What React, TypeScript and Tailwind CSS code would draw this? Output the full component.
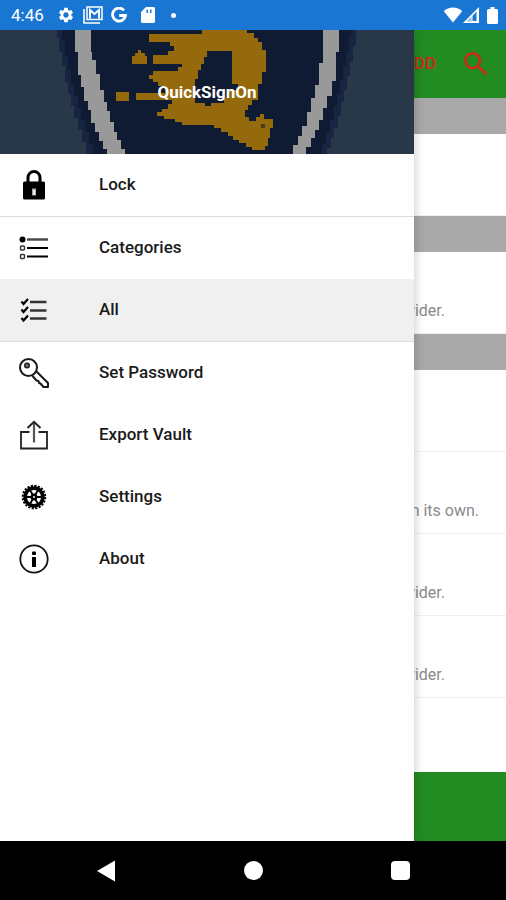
import type { ReactNode } from "react";
import { MdSearch, MdSettings } from "react-icons/md";

function LockIcon() {
  return (
    <svg viewBox="0 0 30 30" className="size-[30px]" aria-hidden="true">
      <path d="M9 12V7.500a6 6 0 0 1 12 0V12" fill="none" stroke="#000" strokeWidth="3" />
      <rect x="4" y="11.500" width="22" height="18" rx="1.500" />
      <path d="M13 18.500h4v7h-4z" fill="#aaa" />
      <path d="M14.500 20h1.500v5h-1.500z" fill="#fff" />
    </svg>
  );
}

function CategoriesIcon() {
  return (
    <svg viewBox="0 0 30 30" className="size-[30px]" aria-hidden="true">
      <circle cx="3.500" cy="6.500" r="3" />
      <path d="M8 6.500h21" stroke="#444" strokeWidth="2.400" />
      <path d="M8 15h21M8 23.500h21" stroke="#000" strokeWidth="2.200" />
      <rect x="1.500" y="13" width="4" height="4" rx="1" fill="none" stroke="#333" strokeWidth="1.400" />
      <rect x="1.500" y="21.500" width="4" height="4" rx="1" fill="none" stroke="#333" strokeWidth="1.400" />
    </svg>
  );
}

function ChecklistIcon() {
  return (
    <svg viewBox="0 0 30 30" className="size-[30px]" aria-hidden="true">
      <path d="M11 7h16.500M11 15.500h16.500M11 23.500h16.500" stroke="#333" strokeWidth="2.400" />
      <path d="M2.500 6.500l2 2.500L9 4M2.500 14.500l2 2.500L9 12M2.500 23l2 2.500L9 20.500" fill="none" stroke="#000" strokeWidth="2.200" />
    </svg>
  );
}

function KeyIcon() {
  return (
    <svg viewBox="0 0 30 30" className="size-[30px]" fill="none" stroke="#1a1a1a" strokeWidth="2" aria-hidden="true">
      <circle cx="9.500" cy="9.500" r="8.500" />
      <circle cx="8" cy="7.500" r="2.300" fill="#777" strokeWidth="1.400" />
      <path d="M17.500 13.500L29 25v4h-4.500l-3-3.500-1.500-.5-.5-2-2-.5-4-4.500" strokeLinejoin="round" />
    </svg>
  );
}

function ExportIcon() {
  return (
    <svg viewBox="0 0 30 30" className="size-[30px]" fill="none" stroke="#222" aria-hidden="true">
      <path d="M10.500 12H2v16.500h26V12h-8.500" strokeWidth="1.800" />
      <path d="M15 2v20.500" stroke="#555" strokeWidth="2.200" />
      <path d="M8.500 8L15 1.800 21.500 8" strokeWidth="2" />
    </svg>
  );
}

function GearIcon() {
  return (
    <svg viewBox="0 0 30 30" className="size-[30px]" fill="none" stroke="#000" aria-hidden="true">
      <circle cx="15" cy="15" r="8.900" strokeWidth="3.600" />
      <circle cx="15" cy="15" r="11.300" strokeWidth="1.900" strokeDasharray="2.200 1.350" />
      <path d="M6 15h18M10.500 7.200l9 15.600M19.500 7.200l-9 15.600" strokeWidth="1.900" />
      <circle cx="15" cy="15" r="3.400" fill="#000" stroke="none" />
      <circle cx="15" cy="15" r="1" fill="#fff" stroke="none" />
    </svg>
  );
}

function InfoIcon() {
  return (
    <svg viewBox="0 0 30 30" className="size-[30px]" aria-hidden="true">
      <circle cx="15" cy="15" r="13.700" fill="none" stroke="#111" strokeWidth="1.800" />
      <rect x="13" y="7.500" width="4" height="3.500" rx="1" />
      <rect x="13" y="13" width="4" height="10" />
    </svg>
  );
}

function MailIcon() {
  return (
    <svg viewBox="0 0 20 18" className="h-[18px] w-5" fill="none" stroke="#fff" aria-hidden="true">
      <path d="M1 3v14h16" strokeWidth="1.600" />
      <rect x="4" y="1" width="15" height="12.500" strokeWidth="1.500" />
      <path d="M7 12.500V4l4.500 4L16 4v8.500" strokeWidth="2" />
    </svg>
  );
}

function GoogleIcon() {
  return (
    <svg viewBox="0 0 16 16" className="size-4" fill="none" stroke="#fff" strokeWidth="2.800" aria-hidden="true">
      <path d="M13 3.400A6.500 6.500 0 1 0 14.500 8.500H8.200" />
    </svg>
  );
}

function SdCardIcon() {
  return (
    <svg viewBox="0 0 14 16" className="h-4 w-3.5" fill="#fff" aria-hidden="true">
      <path
        fillRule="evenodd"
        d="M5 0h7.500A1.500 1.500 0 0 1 14 1.500v13a1.500 1.500 0 0 1-1.500 1.500h-11A1.500 1.500 0 0 1 0 14.500V5zM5.500 2.500V6H7V2.500zM9 2.500V6h1.500V2.500z"
      />
    </svg>
  );
}

function WifiIcon() {
  return (
    <svg viewBox="0 0 20 16" className="h-4 w-5" fill="#fff" aria-hidden="true">
      <path d="M10 15.500L.8 4.200C3.300 1.800 6.500.5 10 .5s6.700 1.300 9.200 3.700z" />
    </svg>
  );
}

function SignalIcon() {
  return (
    <svg viewBox="0 0 16 16" className="size-4" aria-hidden="true">
      <path d="M0 16L16 0v16z" fill="#fff" />
      <path d="M9.500 9L13.500 4.500V14h-4z" fill="#1976d2" />
      <path d="M3.500 14.500l5-5v5z" fill="#8dbbe9" />
    </svg>
  );
}

function BatteryIcon() {
  return (
    <svg viewBox="0 0 11 17" className="h-[17px] w-[11px]" fill="#fff" aria-hidden="true">
      <path d="M3.500 0h4v2h2A1.500 1.500 0 0 1 11 3.500v12A1.500 1.500 0 0 1 9.500 17h-8A1.500 1.500 0 0 1 0 15.500v-12A1.500 1.500 0 0 1 1.500 2h2z" />
    </svg>
  );
}

function StatusBar() {
  return (
    <div className="flex h-[30px] items-center justify-between bg-[#1976d2] pl-[11px] pr-2 text-white">
      <div className="flex items-center">
        <span className="w-[46px] text-[17px] leading-5">4:46</span>
        <div className="flex items-center gap-2">
          <MdSettings className="size-[18px]" />
          <MailIcon />
          <GoogleIcon />
        </div>
        <div className="ml-3.5 flex items-center gap-4">
          <SdCardIcon />
          <span className="size-[5px] rounded-full bg-white" />
        </div>
      </div>
      <div className="flex items-center">
        <WifiIcon />
        <SignalIcon />
        <span className="ml-2">
          <BatteryIcon />
        </span>
      </div>
    </div>
  );
}

// crest behind the drawer title, drawn on a coarse grid
function Crest() {
  return (
    <svg viewBox="0 0 414 124" preserveAspectRatio="xMidYMid slice" className="absolute inset-0 size-full" aria-hidden="true">
      <rect width="414" height="124" fill="#283849" />
      <path
        d="M57 0v8h2v14h3v14h3v16h3v12h3v12h3v12h4v12h4v12h4v12h3v0H327v-6h4v-10h3v-10h4v-12h3v-14h3v-12h3v-14h3v-14h3v-16h3v-16z"
        fill="#182542"
      />
      <path
        d="M62 0v10h3v16h3v14h3v14h3v12h4v12h3v12h4v12h4v12h4v10H322v-10h4v-12h4v-12h4v-14h3v-12h3v-14h3v-14h3v-14h3v-16h2V0z"
        fill="#0f1a33"
      />
      <path
        d="M75 0v22h3v23h3v12h3v14h4v9h3v13h4v9h4v9h4v8h4v5H125v-5h-4v-9h-4v-8h-3v-10h-4v-11h-3v-9h-3v-12h-4v-16h-4v-14h-4V22h-1V0z"
        fill="#999"
      />
      <path
        d="M323 0v33h-4v22h-4v13h-4v14h-4v14h-5v10h-4v9h-5v9H306v-7h5v-9h4v-8h4v-10h4v-12h4V66h5V51h4V22h3V0z"
        fill="#999"
      />
      <g fill="#956a0d">
        <path
          fillRule="evenodd"
          d="M202 0H247V3H254V8H258V12H262V20H266V42H262V54H258V70H252V75H248V80H245V87H249V91H256V87H260V84H264V89H273V98H270V108H268V116H265V120H252V117H246V113H239V110H233V106H228V102H221V98H214V95H182V92H175V89H164V86H157V82H162V79H168V74H172V70H136V63H165V56H158V52H153V49H149V45H153V41H178V37H182V34H153V25H168V21H174V16H170V12H149V4H202ZM207 21V27H204V34H201V40H198V49H195V73H205V76H211V73H224V68H229V60H238V54H232V21Z"
        />
        <path d="M132 26h3v-3h3v-3h3v3h4v3h2v8h-15zM116 62h13v9h-13z" />
      </g>
      <path d="M261 94h4v4h-4z" fill="#493a20" />
    </svg>
  );
}

type MenuEntry = {
  label: string;
  icon: ReactNode;
  active?: boolean;
};

const groups: MenuEntry[][] = [
  [{ label: "Lock", icon: <LockIcon /> }],
  [
    { label: "Categories", icon: <CategoriesIcon /> },
    { label: "All", icon: <ChecklistIcon />, active: true },
  ],
  [
    { label: "Set Password", icon: <KeyIcon /> },
    { label: "Export Vault", icon: <ExportIcon /> },
    { label: "Settings", icon: <GearIcon /> },
    { label: "About", icon: <InfoIcon /> },
  ],
];

function Drawer() {
  return (
    <aside className="absolute inset-y-0 left-0 w-9/11 bg-white shadow-[1px_0_10px_rgba(0,0,0,0.2)]">
      <div className="relative flex h-[124px] items-center justify-center overflow-hidden">
        <Crest />
        <h1 className="relative text-[17px] font-bold leading-5 text-white">QuickSignOn</h1>
      </div>
      <nav className="divide-y divide-[#dcdcdc]">
        {groups.map((group) => (
          <ul key={group[0].label}>
            {group.map((item) => (
              <li key={item.label}>
                <button
                  type="button"
                  className={`flex h-[62px] w-full items-center gap-[50px] pl-[19px] text-left text-[17px] font-medium text-[#1a1a1a] ${
                    item.active ? "bg-[#f0f0f0]" : ""
                  }`}
                >
                  {item.icon}
                  {item.label}
                </button>
              </li>
            ))}
          </ul>
        ))}
      </nav>
    </aside>
  );
}

function Row({ note, inset }: { note?: string; inset?: string }) {
  return (
    <li className={`flex h-[82px] items-end justify-end border-b border-[#f0f0f0] pb-2.5 text-base text-[#8a8a8a] ${inset ?? ""}`}>
      {note}
    </li>
  );
}

function VaultPage() {
  return (
    <main className="flex h-full flex-col overflow-hidden bg-white">
      <header className="flex h-17 items-center justify-end gap-6 bg-[#228b22] pr-3.5 text-[#d0281a]">
        <button type="button" className="text-[17px] font-medium">
          ADD
        </button>
        <button type="button" aria-label="Search">
          <MdSearch className="size-8" />
        </button>
      </header>
      <div className="h-9 bg-[#a9a9a9]" />
      <ul>
        <Row />
      </ul>
      <div className="h-9 bg-[#a9a9a9]" />
      <ul>
        <Row note="provider." inset="pr-[61px]" />
      </ul>
      <div className="h-9 bg-[#a9a9a9]" />
      <ul className="flex-1">
        <Row />
        <Row note="on its own." inset="pr-[27px]" />
        <Row note="provider." inset="pr-[61px]" />
        <Row note="provider." inset="pr-[61px]" />
      </ul>
      <footer className="h-[69px] bg-[#228b22]" />
    </main>
  );
}

function SystemNav() {
  return (
    <div className="flex h-[59px] items-center justify-between bg-black px-20">
      <button type="button" aria-label="Back" className="flex w-13 justify-center">
        <svg viewBox="0 0 20 22" className="h-[22px] w-5" fill="#fff">
          <path d="M1 11L19 .5v21z" />
        </svg>
      </button>
      <button type="button" aria-label="Home" className="flex w-13 justify-center">
        <span className="size-[19px] rounded-full bg-white" />
      </button>
      <button type="button" aria-label="Recent apps" className="flex w-13 justify-center">
        <span className="size-[19px] rounded-sm bg-white" />
      </button>
    </div>
  );
}

export default function App() {
  return (
    <div className="flex min-h-screen flex-col font-['Roboto',sans-serif]">
      <StatusBar />
      <div className="relative grid flex-1 overflow-hidden">
        <VaultPage />
        <Drawer />
      </div>
      <SystemNav />
    </div>
  );
}
